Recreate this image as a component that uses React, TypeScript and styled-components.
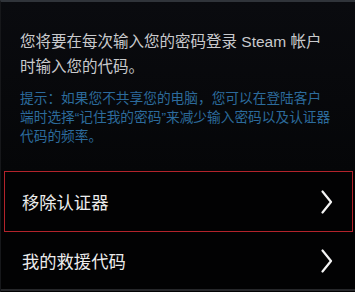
import React from 'react';
import styled, {createGlobalStyle} from 'styled-components';

const GlobalStyle = createGlobalStyle`
  html, body {
    margin: 0;
    padding: 0;
    background: #020203;
  }
  body {
    font-family: "Liberation Sans", "Noto Sans CJK SC", sans-serif;
    -webkit-font-smoothing: antialiased;
  }
`

const Panel = styled.div`
    display: flex;
    flex-direction: column;
    width: 355px;
    height: 292px;
    box-sizing: border-box;
    border-top: 2px solid #30343a;
    border-left: 1px solid #16171a;
    background: #020203;
    overflow: hidden;
`

const Intro = styled.section`
    display: flex;
    flex-direction: column;
    gap: 10px;
    padding: 27px 0 0 19px;
    background: linear-gradient(#0a0b0f, #050608);
    padding-bottom: 25px;
`

const Lead = styled.p`
    margin: 0;
    font-size: 15.5px;
    line-height: 25px;
    color: #c9cacd;
    white-space: nowrap;
`

const Hint = styled.p`
    margin: 0;
    font-size: 13.7px;
    line-height: 19px;
    color: #2c6b9c;
    white-space: nowrap;
`

const List = styled.nav`
    display: flex;
    flex-direction: column;
    border-bottom: 2px solid #26272a;
`

const Row = styled.div<{ $active?: boolean }>`
    display: flex;
    align-items: center;
    justify-content: space-between;
    height: ${p => p.$active ? '61px' : '57px'};
    margin: 0 2px 0 3px;
    padding: 0 19px 0 17px;
    box-sizing: border-box;
    border: 1px solid ${p => p.$active ? '#b3232b' : 'transparent'};
    font-size: 17.3px;
    color: #ececec;
    cursor: pointer;
`

function Chevron() {
  return (
    <svg width="12" height="24" viewBox="0 0 12 24" fill="none">
      <path d="M1.5 1.5 L10 12 L1.5 22.5" stroke="#f4f4f4" strokeWidth="2.2" strokeLinecap="round" strokeLinejoin="round"/>
    </svg>
  );
}

const items = [
  {label: '移除认证器', active: true},
  {label: '我的救援代码', active: false},
];

export default function App() {
  return (
    <>
      <GlobalStyle/>
      <Panel>
        <Intro>
          <Lead>
            您将要在每次输入您的密码登录 Steam 帐户<br/>
            时输入您的代码。
          </Lead>
          <Hint>
            提示：如果您不共享您的电脑，您可以在登陆客户<br/>
            端时选择“记住我的密码”来减少输入密码以及认证器<br/>
            代码的频率。
          </Hint>
        </Intro>
        <List>
          {items.map(item => (
            <Row key={item.label} $active={item.active}>
              <span>{item.label}</span>
              <Chevron/>
            </Row>
          ))}
        </List>
      </Panel>
    </>
  );
}
